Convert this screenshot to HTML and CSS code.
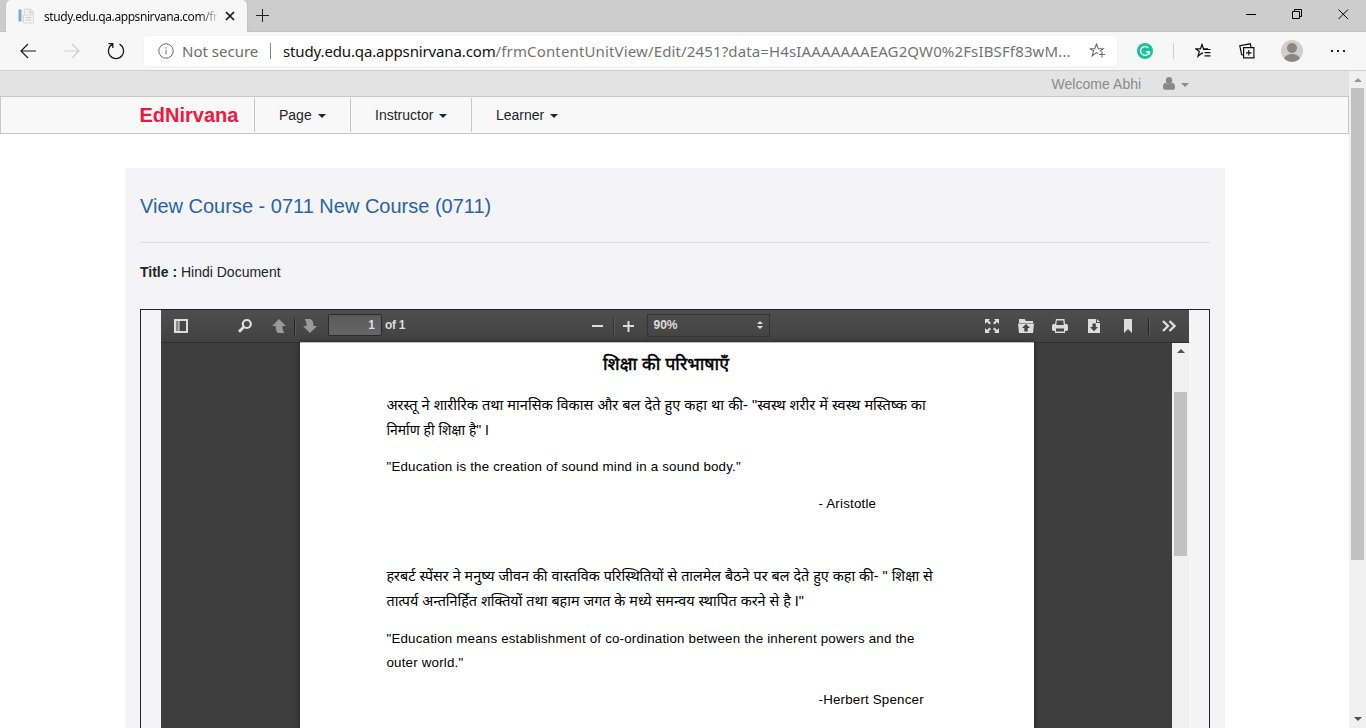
FILE: index.html
```html
<!DOCTYPE html>
<html lang="en">
<head>
<meta charset="utf-8">
<title>study.edu.qa.appsnirvana.com</title>
<link rel="stylesheet" href="styles.css">
</head>
<body>
<div class="tabstrip">
  <div class="tab">
    <svg class="favicon" width="16" height="16" viewBox="0 0 16 16"><path d="M6.500 1h6l3 3v4h-9z" fill="#eef1f4" stroke="#d3d9df"/><path d="M5.500 7h10v8h-10z" fill="#f4f6f8" stroke="#d3d9df"/><path d="M12 1v3.500h3M7.500 9.500h6M7.500 12h6" fill="none" stroke="#c3cbd3"/><path d="M.5 1.500h3v12h-3z" fill="#70aed8"/><path d="M4 2v12" stroke="#c4ddeb"/></svg>
    <span class="tab-title">study.edu.qa.appsnirvana.com/fr</span>
    <svg class="tab-close" width="10" height="10" viewBox="0 0 10 10"><path d="M1 1l8 8M9 1L1 9" stroke="#111" stroke-width="1.700"/></svg>
  </div>
  <svg class="new-tab" width="13" height="13" viewBox="0 0 13 13"><path d="M6.500 0v13M0 6.500h13" stroke="#222"/></svg>
  <div class="window-controls">
    <svg width="11" height="11" viewBox="0 0 11 11"><path d="M0 5.500h10" stroke="#000"/></svg>
    <svg width="11" height="11" viewBox="0 0 11 11" fill="none" stroke="#000"><path d="M.5 2.500h7v7h-7zM2.500 2.500v-2h7v7h-2"/></svg>
    <svg width="11" height="11" viewBox="0 0 11 11"><path d="M.5.5l9.500 9.500M10 .5L.5 10" stroke="#000"/></svg>
  </div>
</div>
<div class="addressbar">
  <svg class="back" width="16" height="16" viewBox="0 0 16 16" fill="none" stroke="#1b1b1b" stroke-width="1.200"><path d="M16 8H1M8 1L1 8l7 7"/></svg>
  <svg class="forward" width="16" height="16" viewBox="0 0 16 16" fill="none" stroke="#cfcfcf" stroke-width="1.200"><path d="M0 8h15M8 1l7 7-7 7"/></svg>
  <svg class="reload" width="18" height="18" viewBox="0 0 18 18" fill="none" stroke="#1b1b1b" stroke-width="1.300"><path d="M5.500 2.200A7.600 7.600 0 1 0 12.500 2.200M1.500 1.700h4.300v4.200"/></svg>
  <div class="urlbox">
    <svg class="info" width="16" height="16" viewBox="0 0 16 16" fill="none" stroke="#6c6c6c"><circle cx="8" cy="8" r="7.200"/><path d="M8 7v4.500M8 4.300v1.400"/></svg>
    <span class="not-secure">Not secure</span>
    <i class="url-sep"></i>
    <span class="url"><b>study.edu.qa.appsnirvana.com</b>/frmContentUnitView/Edit/2451?data=H4sIAAAAAAAEAG2QW0%2FsIBSFf83wM...</span>
    <svg class="star" width="17" height="16" viewBox="0 0 17 16" fill="none" stroke="#6b6b6b" stroke-width="1.100"><path d="M9 10.700l-1.500-1.100-4.300 3.300 1.500-5.200L.8 5.800h4.900L7.500 1l1.800 4.800h4.900L11 8.300M13 8.500v6M10 11.500h6"/></svg>
  </div>
  <svg class="grammarly" width="16" height="16" viewBox="0 0 16 16"><circle cx="8" cy="8" r="8" fill="#15c39a"/><path d="M11.200 4.900A4.400 4.400 0 1 0 12.300 8.800H8.800M12.200 8.500v3" fill="none" stroke="#fff" stroke-width="1.400"/></svg>
  <i class="bar-sep"></i>
  <svg class="favorites" width="16" height="16" viewBox="0 0 16 16" fill="none" stroke="#111" stroke-width="1.200"><path d="M8 10.700L7 10.100 3 13.300 4.300 8.500.8 5.800h4.700L7 1.500l1.500 4.300H13M8 6.500h7.500M9.500 9.700h6M9.500 12.900h6"/></svg>
  <svg class="collections" width="16" height="16" viewBox="0 0 16 16" fill="none" stroke="#111" stroke-width="1.200"><path d="M4.600 4.600h10.300v10.300H4.600zM9.800 7v5.600M7 9.800h5.600M4.500 12.200l-1.900-.6L.8 2.700 11.300.8l.7 3.500"/></svg>
  <svg class="avatar" width="22" height="22" viewBox="0 0 22 22"><circle cx="11" cy="11" r="11" fill="#d0ceca"/><circle cx="11" cy="8" r="5" fill="#8a8682"/><path d="M3.200 18.500c2-6 13.600-6 15.600 0A11 11 0 0 1 3.200 18.500z" fill="#8a8682"/></svg>
  <svg class="more" width="16" height="4" viewBox="0 0 16 4" fill="#222"><path d="M1 1h2v2H1zM7 1h2v2H7zM13 1h2v2h-2z"/></svg>
</div>
<div class="viewport">
  <div class="site">
    <div class="topbar">
      <span>Welcome Abhi</span>
      <svg class="user" width="12" height="13" viewBox="0 0 12 13" fill="#888"><ellipse cx="6" cy="3.500" rx="3.200" ry="3.500"/><path d="M2.700 5.800C.8 6 0 7.500 0 10.500 0 12 .8 12.700 2 12.700h8c1.200 0 2-.7 2-2.200 0-3-.8-4.500-2.700-4.700-1.600 1.700-5 1.700-6.600 0z"/></svg>
      <i class="caret"></i>
    </div>
    <nav class="nav">
      <strong class="brand">EdNirvana</strong>
      <span class="item page">Page<i class="caret"></i></span>
      <span class="item instructor">Instructor<i class="caret"></i></span>
      <span class="item learner">Learner<i class="caret"></i></span>
    </nav>
    <main class="panel">
      <h1 class="heading">View Course - 0711 New Course (0711)</h1>
      <div class="doc-title"><b>Title :</b> Hindi Document</div>
      <div class="frame">
        <div class="reader">
          <div class="reader-bar">
            <svg class="r-sidebar" width="16" height="16" viewBox="0 0 16 16"><path d="M1 1h14v14H1zM3 3v10h2V3zM6.500 3v10H13V3z" fill="#ddd" fill-rule="evenodd"/><path d="M3 3h2.500v10H3z" fill="#888"/></svg>
            <svg class="r-search" width="16" height="16" viewBox="0 0 16 16" fill="none" stroke="#e0e0e0"><circle cx="9.800" cy="6" r="4" stroke-width="2.200"/><path d="M7 8.800L2 13.800" stroke-width="2.800"/></svg>
            <svg class="r-up" width="16" height="16" viewBox="0 0 16 16"><path d="M8 1l7 7h-3.500c0 3 .4 5 2 7H7C5 13.500 4.700 11 4.700 8H1z" fill="#999"/></svg>
            <i class="r-sep"></i>
            <svg class="r-down" width="16" height="16" viewBox="0 0 16 16"><path d="M8 15l7-7h-3.500c0-3-.5-5.500-3-7H2.500c1.600 2 2 4 2 7H1z" fill="#999"/></svg>
            <span class="r-input">1</span><span class="r-of">of 1</span>
            <svg class="r-minus" width="16" height="16" viewBox="0 0 16 16"><path d="M3 8h11" stroke="#ddd" stroke-width="2"/></svg>
            <i class="r-sep short"></i>
            <svg class="r-plus" width="16" height="16" viewBox="0 0 16 16"><path d="M3 8h11M8.500 3v11" stroke="#ddd" stroke-width="2"/></svg>
            <span class="r-select">90%<svg width="6" height="8" viewBox="0 0 6 8" fill="#ddd"><path d="M0 3l3-3 3 3zM0 5h6L3 8z"/></svg></span>
            <svg class="r-full" width="16" height="16" viewBox="0 0 16 16" fill="#ddd"><path d="M1 1h5L4.500 2.500l2.500 2.500L5.500 6.500 3 4 1 6zM15 1v5l-2-2-2.500 2.500L9 5l2.500-2.500L10 1zM1 15v-5l2 2 2.500-2.500L7 11l-2.500 2.500L6 15zM15 15h-5l1.500-1.500L9 11l1.500-1.500L13 12l2-2z"/></svg>
            <svg class="r-icon" width="16" height="16" viewBox="0 0 16 16"><path d="M1 1h5.500l1.500 2h7v2H1zM0 5.500h16L15 15H1z" fill="#ddd"/><path d="M8 6l4 4H9.700v3.500H6.300V10H4z" fill="#444"/></svg>
            <svg class="r-icon" width="16" height="16" viewBox="0 0 16 16"><path d="M4 1h8.500L13 6h2l1 1.500V12l-1.500 1H13v2H3v-2H1.500L0 12V7.500L1 6h2zM4.800 2.500L4.300 7h7.500l-.5-4.500zM4 10.500V13.500h8v-3z" fill="#ddd" fill-rule="evenodd"/></svg>
            <svg class="r-icon" width="16" height="16" viewBox="0 0 16 16"><path d="M2 1h8v4h4v10H2zM11 1l3 3h-3z" fill="#ddd"/><path d="M6.500 5.500h3.300V9H12l-4 4.200L4 9h2.500z" fill="#444"/></svg>
            <svg class="r-icon" width="16" height="16" viewBox="0 0 16 16"><path d="M4 1h8v14l-4-4-4 4z" fill="#ddd"/></svg>
            <i class="r-sep last"></i>
            <svg class="r-more" width="16" height="16" viewBox="0 0 16 16" fill="none" stroke="#ddd" stroke-width="2.400"><path d="M2 3l5 5-5 5M8.500 3l5 5-5 5"/></svg>
          </div>
          <div class="reader-body">
            <article class="paper" lang="hi">
              <h2 class="paper-title">शिक्षा की परिभाषाएँ</h2>
              <p><span class="hindi wide">अरस्तू ने शारीरिक तथा मानसिक विकास और बल देते हुए कहा था की- "स्वस्थ शरीर में स्वस्थ मस्तिष्क का</span><br><span class="hindi short-line">निर्माण ही शिक्षा है" I</span></p>
              <p class="latin">"Education is the creation of sound mind in a sound body."</p>
              <p class="latin author">- Aristotle</p>
              <p class="blank"></p>
              <p><span class="hindi">हरबर्ट स्पेंसर ने मनुष्य जीवन की वास्तविक परिस्थितियों से तालमेल बैठने पर बल देते हुए कहा की- " शिक्षा से</span><br><span class="hindi">तात्पर्य अन्तनिर्हित शक्तियों तथा बहाम जगत के मध्ये समन्वय स्थापित करने से है I"</span></p>
              <p class="latin">"Education means establishment of co-ordination between the inherent powers and the<br>outer world."</p>
              <p class="latin author">-Herbert Spencer</p>
            </article>
            <div class="scroll reader-scroll"><i class="arrow up dark"></i><i class="thumb"></i></div>
          </div>
        </div>
      </div>
    </main>
  </div>
  <div class="scroll page-scroll"><i class="arrow up"></i><i class="thumb"></i><i class="arrow down"></i></div>
</div>
</body>
</html>
```
FILE: styles.css
```css
* { box-sizing: border-box; }
body { margin: 0; width: 1366px; height: 728px; overflow: hidden; display: flex; flex-direction: column; background: #fff; font-family: "Liberation Sans", Arial, sans-serif; color: #212529; }
svg { display: block; flex: none; }
i { font-style: normal; flex: none; }

.tabstrip { height: 32px; flex: none; background: #cdcdcd; border-bottom: 1px solid #c2c2c2; display: flex; align-items: center; }
.tab { height: 32px; width: 241px; margin-left: 6px; padding-left: 12px; background: #f7f7f7; border-radius: 5px 5px 0 0; display: flex; align-items: center; font: 12px "Noto Sans", sans-serif; color: #111; align-self: flex-start; box-shadow: 0 0 2px #aaa; }
.tab-title { margin-left: 10px; width: 173px; white-space: nowrap; letter-spacing: -.42px; background: linear-gradient(90deg, #111 155px, #0002 173px); -webkit-background-clip: text; background-clip: text; color: transparent; }
.tab-close { margin-left: 8px; }
.new-tab { margin-left: 9px; }
.window-controls { margin-left: auto; margin-right: 17px; margin-top: -3px; display: flex; gap: 35px; }

.addressbar { height: 39px; flex: none; background: #f7f7f7; border-bottom: 1px solid #d0d0d0; display: flex; align-items: center; font: 15px "Noto Sans", sans-serif; }
.back { margin-left: 20px; }
.forward { margin-left: 28px; }
.reload { margin-left: 27px; }
.urlbox { width: 973px; height: 30px; margin-left: 19px; background: #fff; border-radius: 4px; display: flex; align-items: center; box-shadow: 0 0 2px #e8e8e8; white-space: nowrap; }
.info { margin-left: 14px; }
.not-secure { margin-left: 8px; width: 88px; color: #6c6c6c; }
.url-sep { width: 1px; height: 16px; background: #8a8a8a; }
.url { margin-left: 12px; width: 790px; color: #737373; letter-spacing: .14px; }
.url b { font-weight: 400; color: #111; letter-spacing: -.13px; }
.star { margin-left: 16px; }
.grammarly { margin-left: 20px; }
.bar-sep { width: 1px; height: 16px; margin-left: 20px; background: #d0d0d0; }
.favorites { margin-left: 21px; }
.collections { margin-left: 28px; }
.avatar { margin-left: 26px; }
.more { margin-left: 27px; }

.viewport { flex: 1; min-height: 0; display: flex; }
.site { width: 1349px; display: flex; flex-direction: column; }
.topbar { height: 25px; flex: none; background: #e3e3e3; display: flex; align-items: center; padding-left: 1051.500px; font-size: 14px; color: #8b8b8b; }
.topbar span { width: 111px; letter-spacing: .04px; padding-top: 1px; }
.caret { display: inline-block; border: 4px solid transparent; border-top-color: currentColor; border-bottom: 0; margin-left: 6px; }
.topbar .caret { margin-top: 2px; }
.nav { height: 38px; flex: none; border: 1px solid #c8c8c8; background: #f8f8f8; padding-left: 138.500px; display: flex; align-items: center; }
.brand { width: 114.500px; font-size: 20px; color: #ed1842; }
.item { height: 34px; border-left: 1px solid #c8c8c8; padding-left: 24px; font-size: 14px; line-height: 34px; }
.item .caret { vertical-align: 2px; margin-left: 6px; }
.page { width: 96px; }
.instructor { width: 121px; }
.panel { width: 1100px; flex: 1; min-height: 0; margin: 34px 0 0 125px; padding: 0 15px; background: #f4f4f6; display: flex; flex-direction: column; }
.heading { margin: 0; height: 75px; flex: none; border-bottom: 1px solid #dcdcde; font-size: 20px; font-weight: 400; line-height: 76px; color: #2a63a5; }
.doc-title { height: 66px; flex: none; font-size: 14px; line-height: 59px; }
.frame { flex: 1; min-height: 0; border: 1px solid #222; border-bottom: 0; padding: 0 20px; display: flex; }
.reader { width: 1028px; display: flex; flex-direction: column; }
.reader-bar { height: 32px; flex: none; background: linear-gradient(#4e4e4e, #424242); display: flex; align-items: center; font-size: 12px; font-weight: 700; color: #ddd; }
.r-sidebar { margin-left: 12px; }
.r-search { margin-left: 48px; }
.r-up { margin-left: 18px; }
.r-sep { width: 1px; height: 17px; margin-left: 7px; background: #242424; box-shadow: 1px 0 #5a5a5a; }
.r-down { margin-left: 7px; }
.r-input { width: 54px; height: 22px; margin-left: 10px; margin-top: -2px; padding-right: 6px; border: 1px solid #2b2b2b; border-radius: 2px; background: linear-gradient(#5a5a5a, #666); text-align: right; line-height: 20px; }
.r-of { width: 26px; margin-left: 3px; margin-top: -2px; white-space: nowrap; letter-spacing: -.3px; }
.r-minus { margin-left: 178px; }
.short { margin-left: 8px; background: #333; }
.r-plus { margin-left: 6px; }
.r-select { width: 123px; height: 23px; margin-left: 11px; margin-top: -2px; padding: 0 6px 0 5.500px; border: 1px solid #343434; display: flex; align-items: center; justify-content: space-between; }
.r-full { margin-left: 214px; }
.r-icon { margin-left: 18px; }
.last { margin-left: 12px; }
.r-more { margin-left: 12px; }
.reader-body { flex: 1; min-height: 0; background: #3e3e3e; border-top: 1px solid #2e2e2e; display: flex; padding-left: 139px; }
.paper { width: 734px; margin-top: -1px; border-top: 1px solid #bbb; padding: 8px 0 0 86.500px; background: #fff; box-shadow: 0 1px 6px #1c1c1c; overflow: hidden; font: 13.330px/24.500px "Liberation Sans", "Noto Sans", "Noto Sans Devanagari", sans-serif; color: #000; white-space: nowrap; }
.paper p { margin: 0 0 12.400px; }
.paper-title { margin: 0 0 17px; padding-left: 216.500px; font-size: 17.800px; font-weight: 400; line-height: 26px; -webkit-text-stroke: .5px #000; }
.latin { letter-spacing: .19px; }
.hindi { font-size: 14.350px; line-height: 1; }
.wide { font-size: 14.550px; }
.short-line { font-size: 13.900px; }
.paper .author { padding-left: 432px; }
.paper .blank { height: 23.800px; }

.scroll { width: 17px; background: #f0f0f0; display: flex; flex-direction: column; align-items: center; flex: none; }
.reader-scroll { margin-left: 138px; }
.arrow { border: 4px solid transparent; }
.up { border-bottom-color: #999; border-top: 0; margin-top: 7px; }
.dark { border-bottom-color: #505050; margin-top: 6px; }
.down { border-top-color: #505050; border-bottom: 0; margin: auto 0 7px; }
.reader-scroll .thumb { width: 13px; height: 164px; margin-top: 39px; background: #c1c1c1; }
.page-scroll .thumb { width: 13px; height: 472px; margin-top: 6px; background: #c1c1c1; }
```
